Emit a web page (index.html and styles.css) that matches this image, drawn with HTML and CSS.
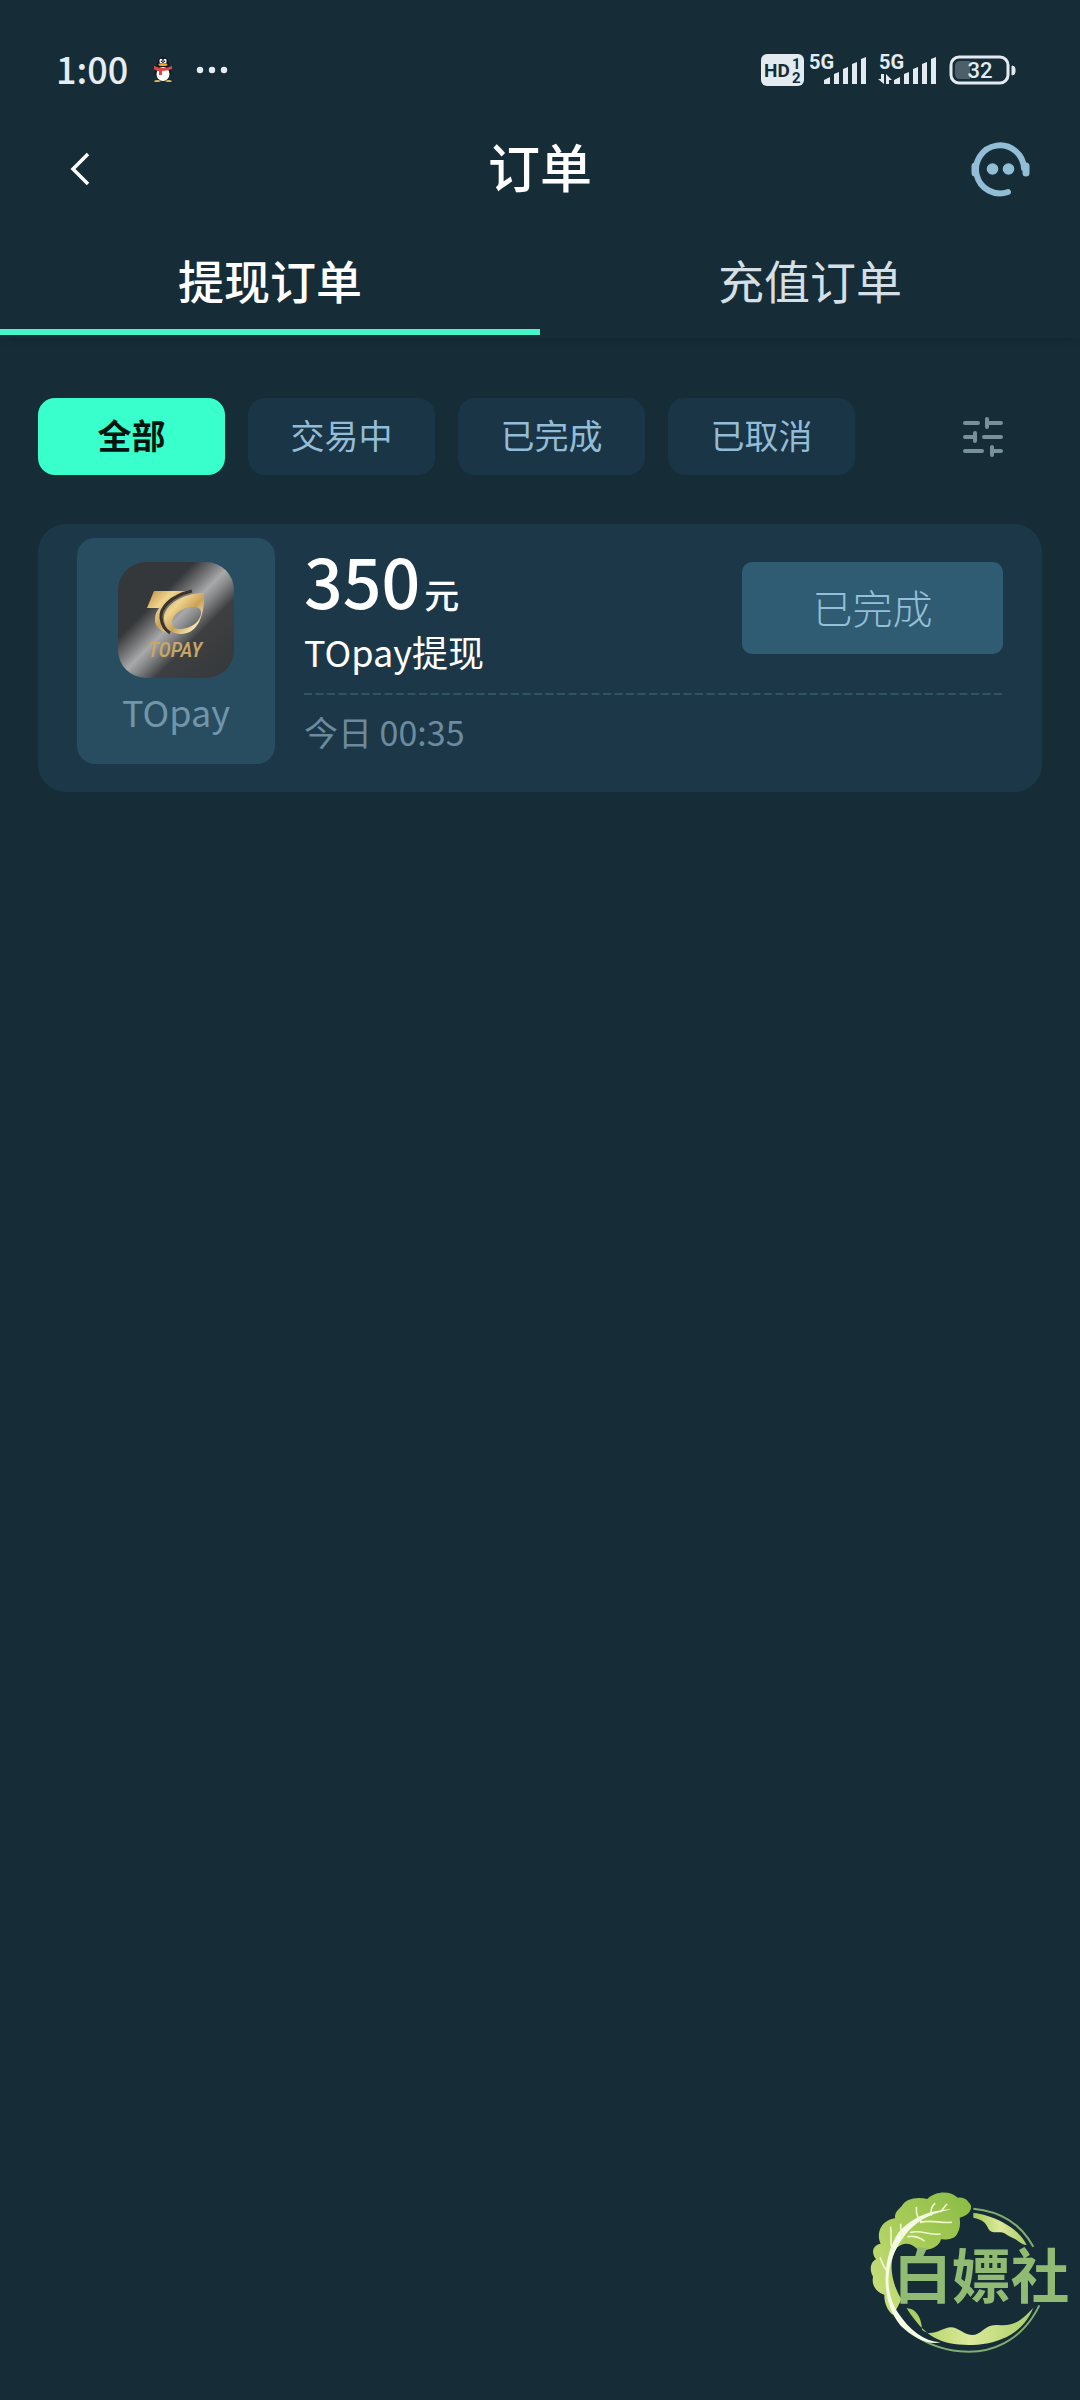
FILE: index.html
```
<!DOCTYPE html>
<html lang="zh-CN">
  <head>
    <meta charset="UTF-8" />
    <meta name="viewport" content="width=device-width, initial-scale=1" />
    <title>订单</title>
    <link rel="stylesheet" href="styles.css">
  </head>
  <body>
    <div class="status">
      <span class="time">1:00</span>
      <svg class="penguin" viewBox="0 0 20 26" width="20" height="26">
        <path d="M4 9C4 3 6 0 10 0s6 3 6 9l3 8-3 1-1 5H5l-1-5-3-1z" fill="#17191c"/>
        <ellipse cx="10" cy="17" rx="6.500" ry="7" fill="#fff"/>
        <ellipse cx="8" cy="4" rx="1.600" ry="2.300" fill="#fff"/>
        <ellipse cx="12" cy="4" rx="1.600" ry="2.300" fill="#fff"/>
        <circle cx="8.500" cy="4.300" r=".8" fill="#111"/>
        <circle cx="11.500" cy="4.300" r=".8" fill="#111"/>
        <ellipse cx="10" cy="7.500" rx="4.500" ry="1.500" fill="#e8a63c"/>
        <path d="M1 9q9 4 18 0v3q-5 2-10 2v4H6v-4q-3 0-5-2z" fill="#dc4646"/>
        <path d="M1 24q3-2 7 0l-2 1H2zM12 24q4-2 7 0l-1 1h-4z" fill="#e8b45a"/>
      </svg>
      <svg class="dots" viewBox="0 0 32 8" width="32" height="8" fill="#e3eef4">
        <circle cx="4" cy="4" r="3.200"/><circle cx="16" cy="4" r="3.200"/><circle cx="28" cy="4" r="3.200"/>
      </svg>
      <svg class="signals" viewBox="0 -10 260 54" width="260" height="54">
        <!-- HD -->
        <rect x="1" y="1" width="43" height="32" rx="6" fill="#e3ebf0"/>
        <g class="sig-text" fill="#162d38">
          <text x="4" y="24" font-size="19">HD</text>
          <text x="32" y="16" font-size="15">1</text>
          <text x="32" y="30" font-size="15">2</text>
        </g>
        <!-- 5G x 2 -->
        <g class="sig-text" fill="#e3ebf0">
          <text x="49" y="16" font-size="20">5G</text>
          <text x="119" y="16" font-size="20">5G</text>
        </g>
        <g fill="#e3ebf0">
          <path d="M64 27l6-3v7h-6zM74 21l5-2v12h-5zM83 16l5-2v17h-5zM92 11l5-2v22h-5zM101 6l5-2v27h-5z"/>
          <path d="M134 27l6-3v7h-6zM144 21l5-2v12h-5zM153 16l5-2v17h-5zM162 11l5-2v22h-5zM171 6l5-2v27h-5z"/>
          <path d="M121 21h3v10l-6-5h3zM127 31h-1V21l6 6h-3v4z"/>
        </g>
        <!-- battery -->
        <rect x="191" y="4" width="57" height="26" rx="8" fill="none" stroke="#e3ebf0" stroke-width="3"/>
        <path d="M200 8h10v18h-10q-5 0-5-5v-8q0-5 5-5z" fill="#4d5f69"/>
        <path d="M252 13q3 0 3 3v3q0 3-3 3z" fill="#e3ebf0" stroke="#e3ebf0"/>
        <text class="sig-num" x="220" y="25" font-size="22" text-anchor="middle" fill="#e3ebf0">32</text>
      </svg>
    </div>

    <header class="nav">
      <button class="icon-btn" type="button" aria-label="返回">
        <svg viewBox="0 0 20 34" width="20" height="34" fill="none" stroke="#fff" stroke-width="3.500"><path d="M18 2L3 17l15 15"/></svg>
      </button>
      <h1>订单</h1>
      <button class="icon-btn" type="button" aria-label="客服">
        <svg viewBox="0 0 60 56" width="60" height="56" fill="none" stroke="#92bdd7" stroke-linecap="round">
          <path d="M54 27A24 24 0 1 0 38 51" stroke-width="6"/>
          <path d="M5 25v7M56 25v7" stroke-width="7"/>
          <g fill="#92bdd7" stroke="none"><circle cx="22.500" cy="28" r="5.800"/><circle cx="38.500" cy="28" r="5.800"/></g>
        </svg>
      </button>
    </header>

    <nav class="tabs">
      <a href="#withdraw" class="on">提现订单</a>
      <a href="#recharge">充值订单</a>
    </nav>

    <main id="withdraw">
      <div class="filters">
        <button type="button" class="chip active">全部</button>
        <button type="button" class="chip">交易中</button>
        <button type="button" class="chip">已完成</button>
        <button type="button" class="chip">已取消</button>
        <button type="button" class="icon-btn filter-btn" aria-label="筛选">
          <svg viewBox="0 0 42 42" width="42" height="42" fill="none" stroke="#76909c" stroke-width="4" stroke-linecap="round">
            <path d="M3 7h13M26 7h13M25 3v8M3 21h10M13 17v8M22 21h17M3 35h17M31 35h8M30 31v8"/>
          </svg>
        </button>
      </div>

      <section class="card">
        <div class="brand">
          <svg class="logo" viewBox="0 0 116 116" width="116" height="116">
            <defs>
              <linearGradient id="metal" x1="0" y1="0" x2="1" y2="1">
                <stop offset="0" stop-color="#35383a"/>
                <stop offset=".33" stop-color="#35383a"/>
                <stop offset=".43" stop-color="#77787a"/>
                <stop offset=".5" stop-color="#a9a9aa"/>
                <stop offset=".56" stop-color="#858687"/>
                <stop offset=".66" stop-color="#3d3f41"/>
                <stop offset="1" stop-color="#35383a"/>
              </linearGradient>
              <linearGradient id="gold" x1="0" y1="0" x2="1" y2="1">
                <stop offset="0" stop-color="#b98c42"/>
                <stop offset=".3" stop-color="#f0d58e"/>
                <stop offset=".55" stop-color="#c9a257"/>
                <stop offset=".8" stop-color="#f6e4ad"/>
                <stop offset="1" stop-color="#b58b45"/>
              </linearGradient>
            </defs>
            <rect width="116" height="116" rx="28" fill="url(#metal)"/>
            <path d="M74 29C52 34 42 46 43 56c1 8 4 12 9 15-9-1-16-7-15-14 0-5 2-8 4-11H29l7-17z" fill="url(#gold)"/>
            <path d="M74 29C52 34 42 46 43 56c1 8 4 12 9 15" fill="none" stroke="#3b332a" stroke-width="3"/>
            <path fill-rule="evenodd" d="M86 31C66 31 46 42 46 56c0 9 7 16 17 16 14 0 24-14 23-41zM54 61c0-9 12-17 23-16 9 1 7 10 1 16-8 7-24 9-24 0z" fill="url(#gold)"/>
            <text class="logo-text" x="57" y="95" font-size="21" text-anchor="middle" fill="#c9a765">TOPAY</text>
          </svg>
          <span>TOpay</span>
        </div>
        <div class="info">
          <div class="summary">
            <div>
              <p class="amount">350<small>元</small></p>
              <p class="name">TOpay提现</p>
            </div>
            <button type="button" class="state">已完成</button>
          </div>
          <svg class="dash" width="100%" height="2"><line x1="0" y1="1" x2="100%" y2="1" stroke="#315366" stroke-width="2" stroke-dasharray="8 3.500"/></svg>
          <p class="date">今日 00:35</p>
        </div>
      </section>
    </main>

    <svg class="stamp" viewBox="0 0 690 600" width="230" height="200">
      <defs>
        <linearGradient id="leaf" x1="1" y1="0" x2="0" y2="1">
          <stop offset="0" stop-color="#8abb45"/>
          <stop offset=".5" stop-color="#a9cd59"/>
          <stop offset="1" stop-color="#d0e486"/>
        </linearGradient>
        <linearGradient id="edge" x1="0" y1="0" x2="1" y2="0">
          <stop offset="0" stop-color="#a5cb5b"/>
          <stop offset=".5" stop-color="#dce99a"/>
          <stop offset="1" stop-color="#a9ce69"/>
        </linearGradient>
      </defs>
      <!-- rings -->
      <g fill="none" stroke="#82ad70" stroke-width="6">
        <path d="M370 116q125 12 180 114"/>
        <path d="M568 406C515 515 420 553 330 544 220 532 130 470 112 360"/>
      </g>
      <path d="M370 129c50 4 135 40 160 96-20-2-24-15-43-22-18-6-16-12-33-16-15-2-30 4-39-11-8-19-17-27-45-33z" fill="url(#edge)"/>
      <path d="M170 415c24-2 45 25 46 64 22 20 44 6 72-4 31-13 50 20 77 20 32 0 38-34 79-30 45 4 68-10 106-52-28 70-92 108-183 112-90 2-140-20-197-110z" fill="url(#edge)"/>
      <!-- leaf -->
      <path d="M130 435c-18-12-28-38-27-61-22-6-40-28-34-54-14-26-4-46 9-52-18-25-6-44 14-47-14-30 0-70 43-76-2-20 15-30 20-36 10-24 48-30 77-22 28-26 70-24 91-4 22-4 32 12 35 16 13 12 2 38-29 44 3 20 0 35-6 45-6 18-29 22-50 20-5 26-46 38-70 30-24-23-44-20-62-5-28 40-17 105 14 155z" fill="url(#leaf)"/>
      <path d="M304 118c-64 14-98 30-137 75-54 66-70 160-25 232 37 56 78 88 130 92-42 8-80-13-120-50-65-76-54-210-6-280 39-42 82-65 158-69z" fill="#f5fae4"/>
      <g fill="none" stroke="#eef7cc" stroke-width="5" stroke-linecap="round">
        <path d="M214 155c-14-14-15-26-15-42M244 135c-3-16 1-26 10-34M272 125l18-22M158 203c-7-15-5-27-6-40M128 240c-10-25-2-42-6-68M109 300c-10-12-14-25-18-36M212 157c30-8 58 3 92 0M182 187c32-8 58 10 88 5M174 200c22-3 34 2 48 12"/>
      </g>
      <text class="stamp-text" x="394" y="385" font-size="176" text-anchor="middle" fill="#91bb72">白嫖社</text>
    </svg>
  </body>
</html>
```
FILE: styles.css
```
*{margin: 0;padding: 0;box-sizing: border-box}
body{
  min-height: 100vh;
  background: #162d38;
  color: #fff;
  font-family: "Noto Sans CJK SC", "Noto Sans", sans-serif;
}
button{
  border: 0;
  background: none;
  color: inherit;
  font-family: inherit;
  cursor: pointer;
}
svg{
  display: block;
}
a{
  text-decoration: none;
}

/* status bar */
.status{
  display: flex;
  align-items: center;
  height: 112px;
  padding: 28px 60px 0 56px;
}
.time{
  color: #e3eef4;
  font-size: 36px;
  font-weight: 500;
  padding-bottom: 4px;
}
.penguin{
  margin-left: 25px;
}
.dots{
  margin-left: 23px;
}
.signals{
  margin-left: auto;
}
.sig-text{
  font-family: Roboto, sans-serif;
  font-weight: 700;
}
.sig-num{
  font-family: Roboto, sans-serif;
  font-weight: 500;
}

/* title */
.nav{
  display: flex;
  align-items: center;
  justify-content: space-between;
  height: 114px;
  padding: 0 48px;
}
.nav h1{
  padding-bottom: 6px;
  font-size: 52px;
  font-weight: 500;
  line-height: 64px;
}
.icon-btn{
  display: flex;
  align-items: center;
  justify-content: center;
  width: 64px;
  height: 64px;
}

.tabs{
  display: flex;
  height: 112px;
  box-shadow: 0 8px 8px -6px rgba(0,0,0,.2);
}
.tabs a{
  position: relative;
  flex: 1;
  line-height: 106px;
  text-align: center;
  font-size: 46px;
  color: #d5dfe6;
}
.tabs .on{
  color: #fff;
  font-weight: 500;
}
.tabs .on::after{
  content: "";
  position: absolute;
  left: 0;
  right: 0;
  bottom: 3px;
  height: 6px;
  background: #48f5c8;
}

main{
  padding: 60px 38px;
}
.filters{
  display: flex;
  align-items: center;
  gap: 23px;
}
.chip{
  width: 187px;
  height: 77px;
  padding-bottom: 4px;
  border-radius: 17px;
  background: #1a3546;
  color: #93bcd6;
  font-size: 34px;
}
.chip.active{
  background: #38ffcb;
  color: #04150f;
  font-weight: 700;
}
.filter-btn{
  margin-left: auto;
  margin-right: 27px;
}

.card{
  display: flex;
  gap: 29px;
  margin-top: 49px;
  padding: 14px 39px 28px;
  border-radius: 28px;
  background: #1c3848;
}
.brand{
  display: flex;
  flex-direction: column;
  align-items: center;
  width: 198px;
  height: 226px;
  padding-top: 24px;
  border-radius: 18px;
  background: #284d60;
  color: #7195a9;
  font-size: 36px;
  line-height: 66px;
}
.logo-text{
  font-family: "Liberation Sans Narrow", "Roboto Condensed", Roboto, sans-serif;
  font-style: italic;
  font-weight: 500;
}
.info{
  flex: 1;
  padding-top: 10px;
}
.summary{
  display: flex;
  justify-content: space-between;
  align-items: flex-start;
  height: 145px;
}
.amount{
  font-size: 68px;
  font-weight: 500;
  line-height: 64px;
}
.amount small{
  margin-left: 4px;
  font-size: 35px;
}
.name{
  font-size: 36px;
  line-height: 50px;
}
.state{
  width: 261px;
  height: 92px;
  margin-top: 14px;
  padding-bottom: 2px;
  border-radius: 10px;
  background: #2f5c72;
  color: #93bfd9;
  font-size: 40px;
  font-weight: 300;
}
.date{
  margin-top: 12px;
  color: #6c8b9e;
  font-size: 34px;
  line-height: 50px;
}

.stamp{
  position: fixed;
  right: 0;
  bottom: 30px;
}
.stamp-text{
  font-weight: 700;
}
```
